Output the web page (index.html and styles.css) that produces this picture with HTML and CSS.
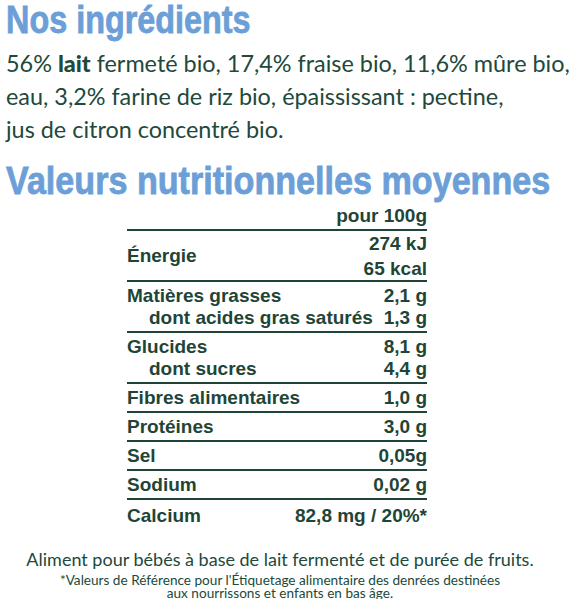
FILE: index.html
```html
<!DOCTYPE html>
<html lang="fr">
<head>
    <meta charset="UTF-8">
    <meta name="viewport" content="width=device-width, initial-scale=1.0">
    <title>Nos ingrédients</title>
    <link rel="stylesheet" href="styles.css">
</head>
<body>
    <div class="page">
        <h1 class="title"><span class="title-text narrow">Nos ingrédients</span></h1>
        <p class="ingredients">
            56% <strong>lait</strong> fermeté bio, 17,4% fraise bio, 11,6% mûre bio,<br>
            eau, 3,2% farine de riz bio, épaississant : pectine,<br>
            jus de citron concentré bio.
        </p>

        <h2 class="title title-second"><span class="title-text wide">Valeurs nutritionnelles moyennes</span></h2>

        <div class="nutrition">
            <div class="nutri-head">pour 100g</div>

            <div class="nutri-row double">
                <div class="label">Énergie</div>
                <div class="values">
                    <span>274 kJ</span>
                    <span>65 kcal</span>
                </div>
            </div>

            <div class="nutri-row double stacked">
                <div class="sub-line">
                    <span class="label">Matières grasses</span>
                    <span class="value">2,1 g</span>
                </div>
                <div class="sub-line sub">
                    <span class="label">dont acides gras saturés</span>
                    <span class="value">1,3 g</span>
                </div>
            </div>

            <div class="nutri-row double stacked">
                <div class="sub-line">
                    <span class="label">Glucides</span>
                    <span class="value">8,1 g</span>
                </div>
                <div class="sub-line sub">
                    <span class="label">dont sucres</span>
                    <span class="value">4,4 g</span>
                </div>
            </div>

            <div class="nutri-row">
                <span class="label">Fibres alimentaires</span>
                <span class="value">1,0 g</span>
            </div>
            <div class="nutri-row">
                <span class="label">Protéines</span>
                <span class="value">3,0 g</span>
            </div>
            <div class="nutri-row">
                <span class="label">Sel</span>
                <span class="value">0,05g</span>
            </div>
            <div class="nutri-row">
                <span class="label">Sodium</span>
                <span class="value">0,02 g</span>
            </div>
            <div class="nutri-row">
                <span class="label">Calcium</span>
                <span class="value">82,8 mg / 20%*</span>
            </div>
        </div>

        <div class="notes">
            <p class="notes-main">Aliment pour bébés à base de lait fermenté et de purée de fruits.</p>
            <p class="notes-small">*Valeurs de Référence pour l'Étiquetage alimentaire des denrées destinées<br>aux nourrissons et enfants en bas âge.</p>
        </div>
    </div>
</body>
</html>
```

FILE: styles.css
```css
body {
    margin: 0;
    padding: 0;
    background-color: #ffffff;
    color: #21493b;
    font-family: Lato, "Open Sans", sans-serif;
}
.page {
    width: 577px;
    padding: 0 0 0 6px;
    box-sizing: border-box;
}
.title {
    margin: 0;
    font-family: "Liberation Sans", Arial, sans-serif;
    font-weight: bold;
    font-size: 39px;
    line-height: 40px;
    color: #6c9fd7;
    white-space: nowrap;
}
.title-text {
    display: inline-block;
    transform-origin: left center;
    -webkit-text-stroke: 0.8px #6c9fd7;
}
.title-text.narrow {
    transform: scaleX(0.83);
}
.title-text.wide {
    transform: scaleX(0.875);
}
.title-second {
    margin-top: 15px;
}
.ingredients {
    margin: 7px 0 0 0;
    font-size: 23.4px;
    line-height: 33px;
    white-space: nowrap;
}
.ingredients strong {
    font-weight: 900;
}
.nutrition {
    width: 300px;
    margin-left: 121px;
    font-family: "Liberation Sans", Arial, sans-serif;
    font-weight: bold;
    font-size: 19px;
    color: #1f4536;
    white-space: nowrap;
}
.nutri-head {
    text-align: right;
    line-height: 26px;
    padding-top: 2px;
}
.nutri-row {
    display: flex;
    justify-content: space-between;
    align-items: center;
    height: 27px;
    border-top: 2px solid #1f4536;
}
.nutri-row.double {
    height: 49px;
}
.nutri-row:last-child {
    height: 32px;
}
.values {
    display: flex;
    flex-direction: column;
    align-items: flex-end;
    line-height: 25px;
}
.nutri-row.stacked {
    flex-direction: column;
    align-items: stretch;
    justify-content: center;
}
.sub-line {
    display: flex;
    justify-content: space-between;
    line-height: 22px;
}
.sub-line.sub .label {
    padding-left: 22px;
}
.notes {
    width: 560px;
    margin-left: -6px;
    margin-top: 16px;
    text-align: center;
}
.notes-main {
    margin: 0;
    font-size: 18px;
    line-height: 22px;
}
.notes-small {
    margin: 4px 0 0 0;
    font-size: 13.6px;
    line-height: 12.5px;
}
```
